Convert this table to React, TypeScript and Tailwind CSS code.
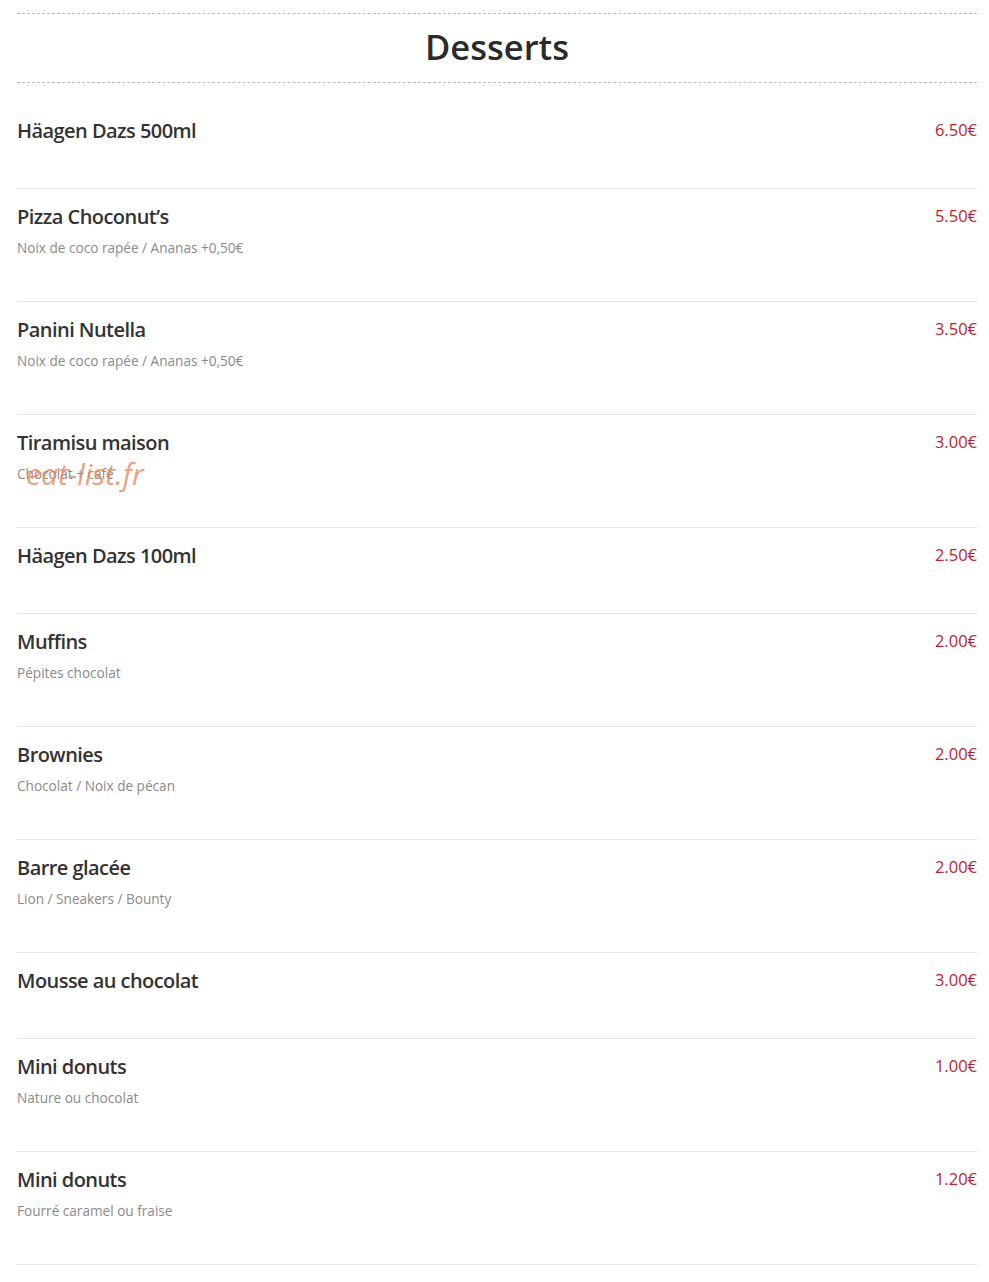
import React from 'react';

type Dessert = {
  name: string;
  description?: string;
  price: string;
};

const desserts: Dessert[] = [
  { name: 'Häagen Dazs 500ml', price: '6.50€' },
  { name: 'Pizza Choconut’s', description: 'Noix de coco rapée / Ananas +0,50€', price: '5.50€' },
  { name: 'Panini Nutella', description: 'Noix de coco rapée / Ananas +0,50€', price: '3.50€' },
  { name: 'Tiramisu maison', description: 'Chocolat + café', price: '3.00€' },
  { name: 'Häagen Dazs 100ml', price: '2.50€' },
  { name: 'Muffins', description: 'Pépites chocolat', price: '2.00€' },
  { name: 'Brownies', description: 'Chocolat / Noix de pécan', price: '2.00€' },
  { name: 'Barre glacée', description: 'Lion / Sneakers / Bounty', price: '2.00€' },
  { name: 'Mousse au chocolat', price: '3.00€' },
  { name: 'Mini donuts', description: 'Nature ou chocolat', price: '1.00€' },
  { name: 'Mini donuts', description: 'Fourré caramel ou fraise', price: '1.20€' },
];

const DessertRow: React.FC<{ item: Dessert; first?: boolean }> = ({ item, first }) => (
  <div
    className={`flex justify-between border-b border-[#e6e6e6] pb-[45px] ${first ? 'pt-[36px]' : 'pt-[16px]'}`}
  >
    <div>
      <div className="text-[20px] leading-[24px] font-semibold text-[#333] font-['Open_Sans',sans-serif] tracking-[-0.55px]">
        {item.name}
      </div>
      {item.description && (
        <div className="mt-[10px] text-[13.6px] leading-[17px] text-[#8a8a8a] font-['Open_Sans',sans-serif]">
          {item.description}
        </div>
      )}
    </div>
    <div className="text-[16.5px] leading-[22px] text-[#c41e2a] font-['Open_Sans',sans-serif]">{item.price}</div>
  </div>
);

export default function App() {
  return (
    <div className="min-h-[1282px] w-[989px] bg-white">
      <div className="relative ml-[17px] w-[960px] pt-[13px]">
        <div className="border-t border-dashed border-[#bbb]" />
        <h1 className="pt-[11px] pb-[13px] text-center text-[34.5px] leading-[44px] font-semibold text-[#2b2b2b] font-['Open_Sans',sans-serif]">
          Desserts
        </h1>
        <div className="border-t border-dashed border-[#bbb]" />
        {desserts.map((d, i) => (
          <DessertRow key={i} item={d} first={i === 0} />
        ))}
        <div className="pointer-events-none absolute left-[9px] top-[451px] text-[30px] italic text-[#e8875a]/80 font-['Open_Sans',sans-serif]">
          eat-list.fr
        </div>
      </div>
    </div>
  );
}
